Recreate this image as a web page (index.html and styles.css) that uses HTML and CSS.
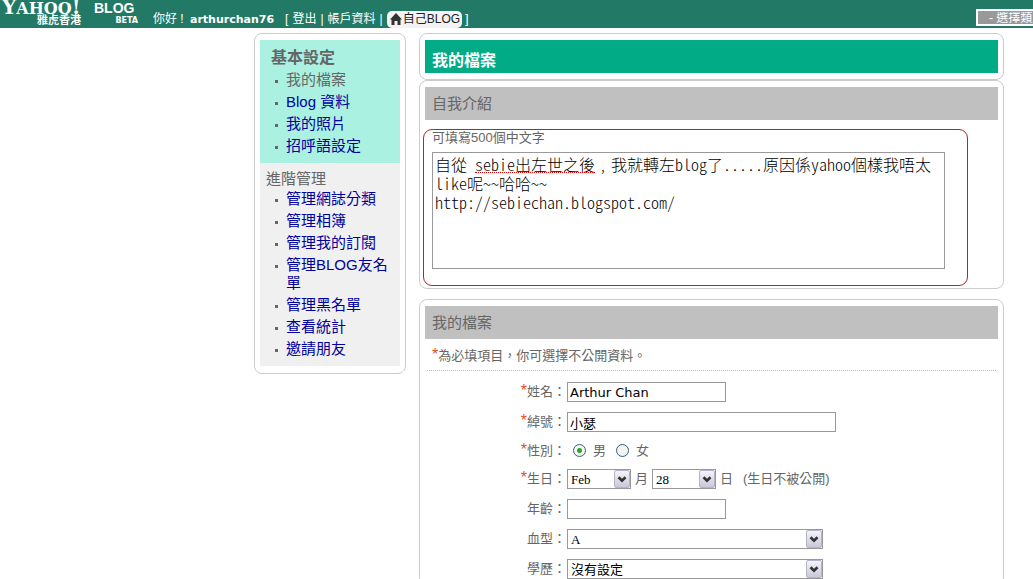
FILE: index.html
```html
<!DOCTYPE html>
<html lang="zh-Hant">
<head>
<meta charset="utf-8">
<title>Yahoo! Blog 雅虎香港</title>
<link rel="stylesheet" href="styles.css">
</head>
<body>
<header class="topbar">
  <a class="logo" href="#">
    <span class="logo-main">
      <span class="logo-yahoo"><span class="logo-y">Y</span>AHOO<span class="logo-y">!</span></span>
      <span class="logo-hk">雅虎香港</span>
    </span>
    <span class="logo-side">
      <span class="logo-blog">BLOG</span>
      <span class="logo-beta">BETA</span>
    </span>
  </a>
  <nav class="usernav">
    <span class="hello">你好 !</span>
    <b class="username">arthurchan76</b>
    <span class="links"><span>[</span><a href="#">登出</a><span>|</span><a href="#">帳戶資料</a><span>|</span></span>
    <a class="pill" href="#">
      <svg width="12" height="12" viewBox="0 0 12 12" aria-hidden="true"><path d="M6 0 12 6.500H10.500V12H7.500V8H4.500V12H1.500V6.500H0Z" fill="#333"/></svg>
      <span>自己BLOG</span>
    </a>
    <span>]</span>
  </nav>
  <select class="category" aria-label="選擇類別"><option>- 選擇類別 -</option></select>
</header>

<div class="page">
  <aside class="box sidebar">
    <section class="basic">
      <h2 class="basic-title">基本設定</h2>
      <ul class="menu">
        <li class="current">我的檔案</li>
        <li><a href="#">Blog 資料</a></li>
        <li><a href="#">我的照片</a></li>
        <li><a href="#">招呼語設定</a></li>
      </ul>
    </section>
    <section class="advanced">
      <h2 class="advanced-title">進階管理</h2>
      <ul class="menu">
        <li><a href="#">管理網誌分類</a></li>
        <li><a href="#">管理相簿</a></li>
        <li><a href="#">管理我的訂閱</a></li>
        <li><a href="#">管理BLOG友名單</a></li>
        <li><a href="#">管理黑名單</a></li>
        <li><a href="#">查看統計</a></li>
        <li><a href="#">邀請朋友</a></li>
      </ul>
    </section>
  </aside>

  <main class="content">
    <div class="box"><h1 class="bar bar-main">我的檔案</h1></div>

    <section class="box intro">
      <h2 class="bar">自我介紹</h2>
      <div class="intro-body">
        <label class="hint" for="about">可填寫500個中文字</label>
        <div class="about-wrap">
          <textarea id="about" class="about" spellcheck="false">自從 sebie出左世之後﹐我就轉左blog了.....原因係yahoo個樣我唔太like呢~~哈哈~~
http://sebiechan.blogspot.com/</textarea>
          <span class="squiggle"></span>
        </div>
        <span class="highlight"></span>
      </div>
    </section>

    <section class="box profile">
      <h2 class="bar">我的檔案</h2>
      <p class="note"><span class="req">*</span>為必填項目，你可選擇不公開資料。</p>
      <form class="form">
        <div class="row">
          <label class="label" for="name"><span class="req">*</span>姓名：</label>
          <input class="field latin short" id="name" type="text" value="Arthur Chan">
        </div>
        <div class="row">
          <label class="label" for="nick"><span class="req">*</span>綽號：</label>
          <input class="field long" id="nick" type="text" value="小瑟">
        </div>
        <div class="row row-radio" role="radiogroup" aria-labelledby="sex">
          <span class="label" id="sex"><span class="req">*</span>性別：</span>
          <label class="choice"><input class="radio" type="radio" name="sex" checked>男</label>
          <label class="choice"><input class="radio" type="radio" name="sex">女</label>
        </div>
        <div class="row">
          <label class="label" for="month"><span class="req">*</span>生日：</label>
          <span class="select small"><select id="month"><option>Feb</option></select><svg class="arrow" viewBox="0 0 16 18" aria-hidden="true"><path d="M4 7 8 11 12 7" /></svg></span>
          <label class="unit" for="month">月</label>
          <span class="select small"><select id="day"><option>28</option></select><svg class="arrow" viewBox="0 0 16 18" aria-hidden="true"><path d="M4 7 8 11 12 7" /></svg></span>
          <label class="unit" for="day">日</label>
          <span class="private">(生日不被公開)</span>
        </div>
        <div class="row">
          <label class="label" for="age">年齡：</label>
          <input class="field short" id="age" type="text">
        </div>
        <div class="row">
          <label class="label" for="blood">血型：</label>
          <span class="select wide"><select id="blood"><option>A</option></select><svg class="arrow" viewBox="0 0 16 18" aria-hidden="true"><path d="M4 7 8 11 12 7" /></svg></span>
        </div>
        <div class="row">
          <label class="label" for="edu">學歷：</label>
          <span class="select wide"><select id="edu"><option>沒有設定</option></select><svg class="arrow" viewBox="0 0 16 18" aria-hidden="true"><path d="M4 7 8 11 12 7" /></svg></span>
        </div>
      </form>
    </section>
  </main>
</div>
</body>
</html>
```
FILE: styles.css
```css
* { box-sizing: border-box; }
html { height: 100%; overflow: hidden; }
body {
  margin: 0;
  background: #fff;
  color: #666;
  font: 13px/18px "Liberation Sans", "Noto Sans CJK TC", sans-serif;
}
h1, h2, p, ul { margin: 0; padding: 0; }
a { color: #0000a0; text-decoration: none; }

.topbar {
  display: flex;
  align-items: flex-end;
  height: 28px;
  background: #227a66;
  color: #fff;
  overflow: hidden;
}
.topbar a { color: #fff; }
.logo { display: flex; gap: 4px; width: 153px; height: 28px; white-space: nowrap; }
.logo-main, .logo-side { display: flex; flex-direction: column; }
.logo-main { width: 90px; align-items: flex-end; padding-right: 9px; }
.logo-yahoo {
  align-self: flex-start;
  display: flex;
  align-items: baseline;
  height: 14px;
  padding-left: 2px;
  font: 16px/14px "DejaVu Serif", serif;
  font-weight: bold;
}
.logo-y { font-size: 20px; line-height: 14px; }
.logo-hk { font: bold 11px/11px "Noto Sans CJK TC", sans-serif; }
.logo-side { width: 44px; align-items: flex-end; }
.logo-blog { align-self: flex-start; font: bold 14px/17px "Liberation Sans", sans-serif; }
.logo-beta { font: bold 8px/7px "DejaVu Sans", sans-serif; }

.usernav { display: flex; align-items: center; height: 18px; white-space: nowrap; }
.hello { width: 37px; font-size: 12px; }
.username { margin-right: 11px; font: bold 11px "DejaVu Sans", sans-serif; }
.links { display: flex; gap: 4px; margin-right: 4px; font-size: 12px; }
.pill {
  display: flex;
  align-items: center;
  gap: 1px;
  height: 17px;
  margin-right: 3px;
  padding: 0 2px 0 3px;
  border-radius: 5px;
  background: #f3f3f3;
  font-size: 12px;
}
.topbar .pill { color: #222; }
.category {
  appearance: none;
  flex: none;
  width: 100px;
  height: 17px;
  margin: 0 -43px 2px auto;
  padding: 1px 10px 0 11px;
  border: 2px solid #fff;
  border-radius: 0;
  background: #999;
  color: #fff;
  font: 12px/12px "Liberation Sans", "Noto Sans CJK TC", sans-serif;
}

.page {
  display: grid;
  grid-template-columns: 152px minmax(0, 1fr);
  align-items: start;
  gap: 13px;
  padding: 5px 29px 0 254px;
}
.box { border: 1px solid #ccc; border-radius: 8px; padding: 6px 5px; }
.sidebar { padding-bottom: 7px; }
.basic { background: #aaf1e1; padding: 8px 8px 6px 11px; }
.basic-title { font-size: 16px; line-height: 20px; padding-bottom: 1px; }
.advanced { background: #f0f0f0; padding: 7px 8px 6px 11px; }
.advanced-title { margin-left: -5px; font-size: 15px; font-weight: normal; line-height: 18px; }
.menu { list-style: none; }
.menu li {
  position: relative;
  padding: 2px 0 2px 15px;
  font-size: 15px;
  line-height: 18px;
}
.menu li::before {
  content: "";
  position: absolute;
  left: 4px;
  top: 11px;
  width: 3px;
  height: 3px;
  background: #666;
}

.bar {
  padding: 0 7px;
  background: #c0c0c0;
  font-size: 15px;
  font-weight: normal;
  line-height: 33px;
}
.bar-main {
  padding-top: 9px;
  background: #00ab86;
  color: #fff;
  font-size: 16px;
  font-weight: bold;
  line-height: 24px;
}
.intro { margin-bottom: 10px; }
.intro-body { position: relative; padding: 9px 53px 13px 7px; }
.hint { display: block; padding-bottom: 5px; }
.about-wrap { position: relative; }
.about {
  display: block;
  width: 100%;
  height: 117px;
  padding: 2px;
  border: 1px solid #999;
  resize: none;
  overflow: hidden;
  color: #000;
  font: 16px/19px "Noto Sans CJK TC", sans-serif;
  font-weight: 300;
  font-feature-settings: "hwid";
}
.squiggle {
  position: absolute;
  left: 43px;
  top: 20px;
  width: 120px;
  border-top: 1px dotted #e00000;
}
.highlight {
  position: absolute;
  inset: 9px 30px -4px -2px;
  border: 1px solid #c41c2c;
  border-radius: 9px;
  pointer-events: none;
}
.note { margin: 0 2px; padding: 8px 5px 5px; border-bottom: 1px dotted #bbb; }
.req { color: #e8501c; font-size: 16px; line-height: 16px; }
.form { display: grid; gap: 10px; padding-top: 11px; }
.row { display: flex; align-items: center; height: 20px; }
.row-radio { height: 17px; }
.label { width: 142px; padding-right: 1px; text-align: right; line-height: 18px; }
.field {
  height: 20px;
  padding: 0 2px;
  border: 1px solid #999;
  color: #000;
  font: 13px "Liberation Sans", "Noto Sans CJK TC", sans-serif;
}
.latin { font-family: "DejaVu Sans", sans-serif; }
.short { width: 159px; }
.long { width: 269px; }
.choice { display: flex; align-items: center; gap: 7px; margin-left: 6px; }
.choice + .choice { margin-left: 10px; }
.radio {
  appearance: none;
  width: 13px;
  height: 13px;
  margin: 0;
  border: 1px solid #2f5f8f;
  border-radius: 50%;
  background: #f4f4f0;
}
.radio:checked { background: radial-gradient(circle, #2ba52b 0 2px, #f4f4f0 3px); }
.select { position: relative; display: block; height: 20px; }
.select select {
  appearance: none;
  width: 100%;
  height: 20px;
  padding: 0 18px 0 3px;
  border: 1px solid #999;
  border-radius: 0;
  background: #fff;
  color: #000;
  font: 13px "Liberation Serif", "Noto Sans CJK TC", serif;
}
.arrow {
  position: absolute;
  top: 1px;
  right: 1px;
  width: 16px;
  height: 18px;
  border: 1px solid #b4b4c4;
  border-radius: 2px;
  background: linear-gradient(#f4f4fa, #c8c8da);
  fill: none;
  stroke: #333;
  stroke-width: 3;
  pointer-events: none;
}
.small { width: 64px; }
.wide { width: 256px; }
.unit { padding: 0 4px; }
.private { padding-left: 6px; }
```
